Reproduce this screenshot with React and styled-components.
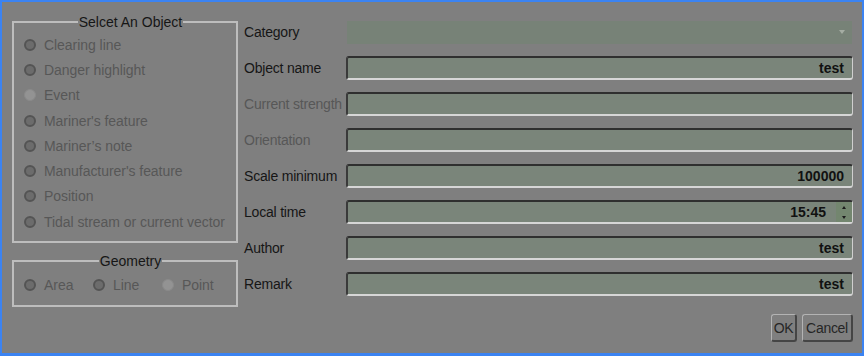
import React from "react";
import styled, { createGlobalStyle } from "styled-components";

const GlobalStyle = createGlobalStyle`
  html, body {
    margin: 0;
    padding: 0;
    background: #7f7f7f;
  }
  body {
    font-family: "Liberation Sans", Arial, sans-serif;
  }
`;

const Window = styled.div`
  width: 864px;
  height: 356px;
  box-sizing: border-box;
  border: 2px solid #3b83f2;
  border-bottom-width: 3px;
  background: #7f7f7f;
  display: flex;
  font-size: 14px;
  color: #161616;
`;

const LeftColumn = styled.div`
  display: flex;
  flex-direction: column;
  gap: 10px;
  padding: 12px 0 0 10px;
  width: 226px;
  flex-shrink: 0;
`;

const GroupBox = styled.fieldset`
  margin: 0;
  border: 2px solid #bdbdbd;
  padding: ${(p) => p.$pad || "2px 0 7px 11px"};
  min-width: 0;
`;

const Legend = styled.legend`
  margin: 0 auto;
  padding: 0 1px;
  line-height: 16px;
  color: #161616;
`;

const OptionRow = styled.div`
  display: flex;
  align-items: center;
  height: 25.3px;
  width: ${(p) => p.$width || "auto"};
  color: #575757;
  white-space: nowrap;
  letter-spacing: -0.05px;
`;

const InlineOptions = styled.div`
  display: flex;
  padding-top: 1px;
`;

const Radio = styled.span`
  width: 12px;
  height: 12px;
  box-sizing: border-box;
  border-radius: 50%;
  flex-shrink: 0;
  margin: 0 8px 0 -1px;
  background: ${(p) => (p.$light ? "#939393" : "#6c6c6c")};
  border: ${(p) => (p.$light ? "1px solid #8a8a8a" : "2px solid #545454")};
`;

const RightColumn = styled.div`
  flex: 1;
  display: flex;
  flex-direction: column;
  padding: 18px 9px 0 6px;
`;

const Form = styled.div`
  display: grid;
  grid-template-columns: 102px 1fr;
  grid-auto-rows: 24px;
  row-gap: 12px;
  align-items: center;
`;

const Label = styled.div`
  color: ${(p) => (p.$disabled ? "#575757" : "#161616")};
  white-space: nowrap;
  letter-spacing: -0.2px;
`;

const Combo = styled.div`
  height: 23px;
  margin-left: 1px;
  margin-right: 1px;
  background: #778277;
  display: flex;
  justify-content: flex-end;
  align-items: center;
  padding-right: 7px;
`;

const ComboArrow = styled.span`
  width: 0;
  height: 0;
  border-left: 3.5px solid transparent;
  border-right: 3.5px solid transparent;
  border-top: 4px solid #a5ada3;
`;

const Field = styled.div`
  height: 24px;
  box-sizing: border-box;
  border-radius: 3px;
  border-top: 2px solid #2f2f2f;
  border-left: 2px solid #3a3a3a;
  border-bottom: 2px solid #d6d6d6;
  border-right: 1px solid #cfcfcf;
  background: #7a857a;
  display: flex;
  align-items: center;
  justify-content: flex-end;
  padding-right: ${(p) => (p.$spin ? "0" : "8px")};
  font-weight: bold;
  color: #111;
  font-size: 14px;
`;

const Spinner = styled.div`
  width: 16px;
  align-self: stretch;
  margin-left: 10px;
  background: #73866f;
  display: flex;
  flex-direction: column;
  align-items: center;
  justify-content: center;
  gap: 7px;
`;

const SpinArrow = styled.span`
  width: 0;
  height: 0;
  border-left: 2px solid transparent;
  border-right: 2px solid transparent;
  ${(p) =>
    p.$down
      ? "border-top: 3px solid #1a1a1a;"
      : "border-bottom: 3px solid #1a1a1a;"}
`;

const ButtonBar = styled.div`
  display: flex;
  justify-content: flex-end;
  gap: 5px;
  margin-top: 18px;
`;

const Button = styled.div`
  height: 28px;
  box-sizing: border-box;
  width: ${(p) => p.$width};
  border-radius: 3px;
  border-top: 1px solid #b3b3b3;
  border-left: 1px solid #b3b3b3;
  border-right: 2px solid #454545;
  border-bottom: 2px solid #454545;
  display: flex;
  align-items: center;
  justify-content: center;
  color: #262626;
  font-size: 14px;
  letter-spacing: -0.3px;
`;

const objects = [
  ["Clearing line", false],
  ["Danger highlight", false],
  ["Event", true],
  ["Mariner's feature", false],
  ["Mariner’s note", false],
  ["Manufacturer's feature", false],
  ["Position", false],
  ["Tidal stream or current vector", false],
];

const geometry = [
  ["Area", false],
  ["Line", false],
  ["Point", true],
];

const fields = [
  ["Object name", "test"],
  ["Current strength", "", true],
  ["Orientation", "", true],
  ["Scale minimum", "100000"],
];

const App = () => {
  return (
    <Window>
      <GlobalStyle />
      <LeftColumn>
        <GroupBox>
          <Legend>Selcet An Object</Legend>
          {objects.map(([name, light]) => (
            <OptionRow key={name}>
              <Radio $light={light} />
              {name}
            </OptionRow>
          ))}
        </GroupBox>
        <GroupBox $pad="2px 0 7px 11px">
          <Legend>Geometry</Legend>
          <InlineOptions>
            {geometry.map(([name, light]) => (
              <OptionRow key={name} $width="69px">
                <Radio $light={light} />
                {name}
              </OptionRow>
            ))}
          </InlineOptions>
        </GroupBox>
      </LeftColumn>
      <RightColumn>
        <Form>
          <Label>Category</Label>
          <Combo>
            <ComboArrow />
          </Combo>
          {fields.map(([name, value, disabled]) => (
            <React.Fragment key={name}>
              <Label $disabled={disabled}>{name}</Label>
              <Field>{value}</Field>
            </React.Fragment>
          ))}
          <Label>Local time</Label>
          <Field $spin>
            15:45
            <Spinner>
              <SpinArrow />
              <SpinArrow $down />
            </Spinner>
          </Field>
          <Label>Author</Label>
          <Field>test</Field>
          <Label>Remark</Label>
          <Field>test</Field>
        </Form>
        <ButtonBar>
          <Button $width="26px">OK</Button>
          <Button $width="51px">Cancel</Button>
        </ButtonBar>
      </RightColumn>
    </Window>
  );
};

export default App;
